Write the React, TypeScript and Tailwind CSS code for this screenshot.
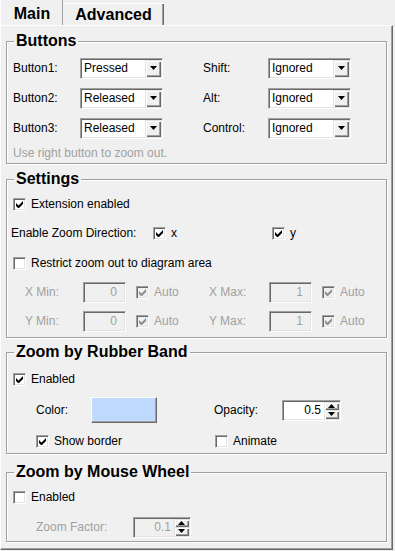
import React from "react";

const sunken =
  "border border-t-[#a0a0a0] border-l-[#a0a0a0] border-r-white border-b-white shadow-[inset_1px_1px_0_#696969,inset_-1px_-1px_0_#e3e3e3]";
const raised =
  "bg-[#f0f0f0] shadow-[inset_1px_1px_0_#e3e3e3,inset_2px_2px_0_#fff,inset_-1px_-1px_0_#696969,inset_-2px_-2px_0_#a0a0a0]";

const Check: React.FC<{ checked?: boolean; disabled?: boolean }> = ({ checked, disabled }) => (
  <span
    className={
      disabled
        ? `${sunken} flex w-[13px] h-[13px] shrink-0 bg-[#f0f0f0] items-center justify-center`
        : `${sunken} flex w-[13px] h-[13px] shrink-0 bg-white items-center justify-center`
    }
  >
    {checked && (
      <svg width="7" height="7" viewBox="0 0 7 7">
        <path d="M0 2v3l2 2h1l4-4V0L2.5 4.5Z" fill={disabled ? "#8d8d8d" : "#000"} />
      </svg>
    )}
  </span>
);

const CheckLabel: React.FC<{ checked?: boolean; disabled?: boolean; text: string }> = (props) => (
  <div className="flex items-center gap-[5px]">
    <Check checked={props.checked} disabled={props.disabled} />
    <span className={props.disabled ? "text-[#a0a0a0]" : "text-black"}>{props.text}</span>
  </div>
);

const Arrow: React.FC<{ up?: boolean }> = ({ up }) => (
  <svg width="7" height="4" viewBox="0 0 7 4">
    <path d={up ? "M3.5 0L7 4H0Z" : "M0 0h7L3.5 4Z"} fill="#000" />
  </svg>
);

const Select: React.FC<{ value: string }> = ({ value }) => (
  <div className={`${sunken} flex w-[83px] h-[21px] bg-white items-center justify-between pl-[3px] pr-[1px]`}>
    <span className="text-[#000]">{value}</span>
    <span className={`${raised} flex w-[16px] h-[17px] items-center justify-center`}>
      <Arrow />
    </span>
  </div>
);

const Spin: React.FC<{ value: string; width: string; disabled?: boolean }> = (props) => (
  <div
    className={`${sunken} flex h-[21px] items-center justify-end pr-[1px] ${props.width} ${
      props.disabled ? "bg-[#f0f0f0] text-[#a0a0a0]" : "bg-white text-black"
    }`}
  >
    <span className="mr-[3px]">{props.value}</span>
    <div className="flex flex-col w-[15px] h-[17px]">
      <span className={`${raised} flex flex-1 items-center justify-center`}>
        <Arrow up />
      </span>
      <span className={`${raised} flex flex-1 items-center justify-center`}>
        <Arrow />
      </span>
    </div>
  </div>
);

const NumBox: React.FC<{ value: string }> = ({ value }) => (
  <div className={`${sunken} flex w-[43px] h-[21px] bg-[#f0f0f0] items-center justify-end pr-[8px] text-[#a0a0a0]`}>
    {value}
  </div>
);

const Group: React.FC<{ title: string; className: string; children: React.ReactNode }> = (props) => (
  <fieldset
    className={`border border-[#a0a0a0] shadow-[inset_1px_1px_0_#fff,1px_1px_0_#fff] ${props.className}`}
  >
    <legend className="ml-[7px] px-[2px] h-[18px] leading-[18px] text-[16px] font-bold text-black">
      {props.title}
    </legend>
    {props.children}
  </fieldset>
);

export default function App() {
  return (
    <div className="w-[395px] h-[551px] bg-[#f0f0f0] font-['Liberation_Sans',Arial,sans-serif] text-[12px] text-black overflow-hidden">
      {/* tabs */}
      <div className="flex items-end h-[25px]">
        <div className="flex w-[63px] h-[26px] items-center justify-center text-[16px] font-bold border-l border-t border-white shadow-[inset_-1px_0_0_#a0a0a0] relative z-10 bg-[#f0f0f0] pt-[3px]">
          Main
        </div>
        <div className="flex w-[101px] h-[22px] items-center justify-center text-[16px] font-bold border-t border-white shadow-[inset_-1px_0_0_#696969,inset_-2px_0_0_#a0a0a0] pt-[1px]">
          Advanced
        </div>
      </div>

      {/* panel */}
      <div className="w-[393px] h-[525px] border-t border-l border-white border-r border-b border-r-[#696969] border-b-[#696969] shadow-[inset_-1px_-1px_0_#a0a0a0] px-[5px] pt-[6px]">
        <Group title="Buttons" className="pt-[3px]">
          <div className="flex flex-col pl-[6px]">
            {[
              ["Button1:", "Pressed", "Shift:"],
              ["Button2:", "Released", "Alt:"],
              ["Button3:", "Released", "Control:"],
            ].map(([l, v, r]) => (
              <div key={l} className="flex h-[30px] items-center">
                <span className="w-[67px]">{l}</span>
                <Select value={v} />
                <span className="ml-[40px] w-[65px]">{r}</span>
                <Select value="Ignored" />
              </div>
            ))}
            <div className="flex h-[20px] items-center text-[#a0a0a0]">Use right button to zoom out.</div>
          </div>
        </Group>

        <Group title="Settings" className="mt-[6px] pt-[1px]">
          <div className="flex flex-col">
            <div className="flex h-[30px] items-center pl-[6px]">
              <CheckLabel checked text="Extension enabled" />
            </div>
            <div className="flex h-[28px] items-center pl-[4px]">
              <span className="w-[142px]">Enable Zoom Direction:</span>
              <div className="w-[119px]">
                <CheckLabel checked text="x" />
              </div>
              <CheckLabel checked text="y" />
            </div>
            <div className="flex h-[32px] items-center pl-[6px]">
              <CheckLabel text="Restrict zoom out to diagram area" />
            </div>
            {[
              ["X Min:", "X Max:", "h-[26px]"],
              ["Y Min:", "Y Max:", "h-[32px]"],
            ].map(([a, b, h]) => (
              <div key={a} className={`flex items-center pl-[18px] ${h}`}>
                <span className="w-[58px] text-[#a0a0a0]">{a}</span>
                <NumBox value="0" />
                <div className="ml-[10px] w-[73px]">
                  <CheckLabel checked disabled text="Auto" />
                </div>
                <span className="w-[60px] text-[#a0a0a0]">{b}</span>
                <NumBox value="1" />
                <div className="ml-[10px]">
                  <CheckLabel checked disabled text="Auto" />
                </div>
              </div>
            ))}
          </div>
        </Group>

        <Group title="Zoom by Rubber Band" className="mt-[5px] pt-[6px]">
          <div className="flex flex-col">
            <div className="flex h-[24px] items-center pl-[6px]">
              <CheckLabel checked text="Enabled" />
            </div>
            <div className="flex h-[26px] mt-[6px] items-center pl-[29px]">
              <span className="w-[55px]">Color:</span>
              <div className="w-[66px] h-[26px] bg-[#c0d9ff] border border-t-white border-l-white border-r-[#696969] border-b-[#696969] shadow-[inset_-1px_-1px_0_#a0a0a0]" />
              <span className="ml-[57px] w-[68px]">Opacity:</span>
              <Spin value="0.5" width="w-[59px]" />
            </div>
            <div className="flex h-[24px] mt-[6px] items-center pl-[29px]">
              <div className="w-[179px]">
                <CheckLabel checked text="Show border" />
              </div>
              <CheckLabel text="Animate" />
            </div>
          </div>
        </Group>

        <Group title="Zoom by Mouse Wheel" className="mt-[9px] pt-[4px] pb-[2px]">
          <div className="flex flex-col">
            <div className="flex h-[24px] items-center pl-[6px]">
              <CheckLabel text="Enabled" />
            </div>
            <div className="flex h-[24px] mt-[6px] items-center pl-[29px]">
              <span className="w-[97px] text-[#a0a0a0]">Zoom Factor:</span>
              <Spin value="0.1" width="w-[58px]" disabled />
            </div>
          </div>
        </Group>
      </div>
    </div>
  );
}
